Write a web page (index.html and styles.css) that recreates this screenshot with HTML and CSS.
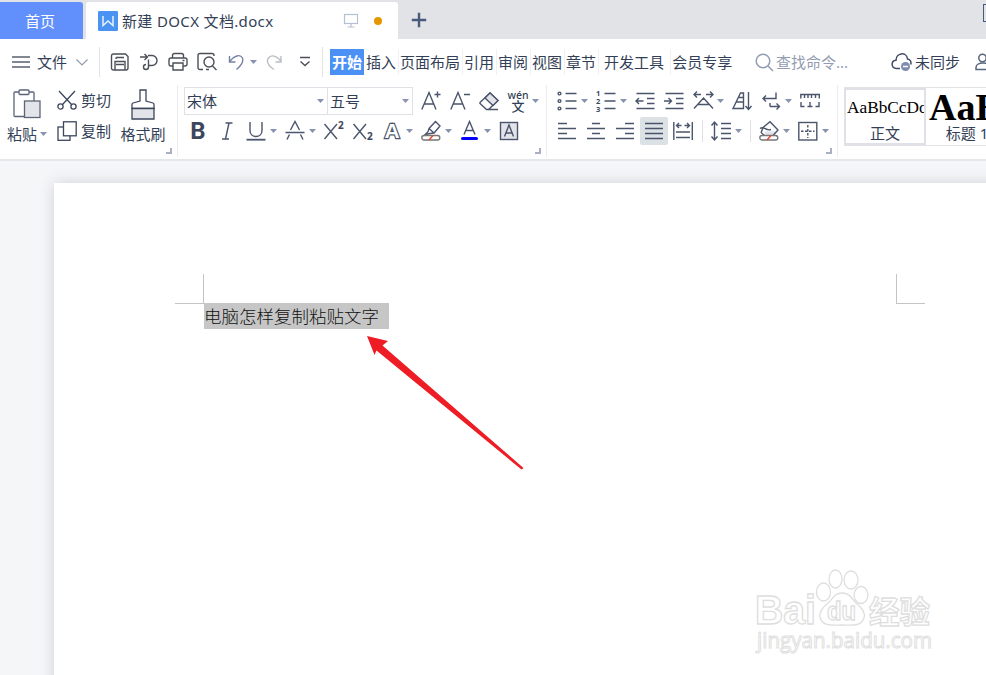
FILE: index.html
```html
<!DOCTYPE html>
<html lang="zh-CN">
<head>
  <meta charset="UTF-8">
  <meta name="viewport" content="width=device-width, initial-scale=1.0">
  <title>新建 DOCX 文档.docx</title>
  <link rel="stylesheet" href="styles.css">
</head>
<body>
  <div class="tabbar">
    <div class="tab-home">首页</div>
    <div class="tab-doc">
      <svg class="doc-logo" width="20" height="20" viewBox="0 0 20 20"><rect width="20" height="20" rx="1" fill="#4a93f3"/><path d="M5 5v9.500l5-4.500 5 4.500V5" fill="none" stroke="#e8f2ff" stroke-width="1.500"/></svg>
      <span class="doc-name">新建 DOCX 文档.docx</span>
      <svg class="monitor" width="16" height="16" viewBox="0 0 16 16" fill="none" stroke="#b7bfd2" stroke-width="1.200"><rect x="1.500" y="1.500" width="13" height="9"/><path d="M8 10.500v3M4.500 14h7"/></svg>
      <span class="unsaved"></span>
    </div>
    <svg class="new-tab" width="16" height="16" viewBox="0 0 16 16" stroke="#4a5a7b" stroke-width="2.400"><path d="M8 .8v14.400M.8 8h14.400"/></svg>
    <span class="window-edge"></span>
  </div>

  <div class="menubar">
    <div class="file-menu">
      <svg width="18" height="14" viewBox="0 0 18 14" stroke="#59616f" stroke-width="1.300"><path d="M0 2h18M0 7h18M0 12h18"/></svg>
      <span>文件</span>
      <svg class="chevron" width="12" height="8" viewBox="0 0 12 8" fill="none" stroke="#929aaa" stroke-width="1.200"><path d="M.5 1.500l5.500 5.500 5.500-5.500"/></svg>
    </div>
    <div class="quick">
      <svg viewBox="0 0 20 20"><path d="M3.500 2h12l2.500 2.500V16a2 2 0 0 1-2 2H3.500a2 2 0 0 1-2-2V4a2 2 0 0 1 2-2zM5 18v-8.500h10V18M6 5.500h8M6 5.500V7M6 12.500h8"/></svg>
      <svg viewBox="0 0 20 20"><path d="M1 5h7M5.500 2l3 3-3 3M9 3.500h4a5 5 0 0 1 0 10H9.500V7.500M9.500 13.500v1.500a2.500 2.500 0 1 1-2.500-2.500"/></svg>
      <svg viewBox="0 0 20 20"><path d="M4.500 6V3.500a2 2 0 0 1 2-2h7a2 2 0 0 1 2 2V6M5 14H3a2 2 0 0 1-2-2V8a2 2 0 0 1 2-2h14a2 2 0 0 1 2 2v4a2 2 0 0 1-2 2h-2M5 11h10v7H5zM14.500 8.500h2"/></svg>
      <svg viewBox="0 0 20 20"><path d="M6 17.500H3a2 2 0 0 1-2-2v-12a2 2 0 0 1 2-2h12a2 2 0 0 1 2 2V4"/><circle cx="12" cy="10" r="5"/><path d="M15.500 14l4 4M9 17.500h3"/></svg>
      <svg class="undo" viewBox="0 0 20 20"><path d="M2.500 4v6h6M2.500 9.500C7 4 13 1.500 15.500 6c2 4-2 8-6 11.500"/></svg>
      <i class="caret"></i>
      <svg class="redo" viewBox="0 0 20 20"><path d="M16 4v6h-5.500M16 9.500C12 3.500 6 2 3 6.500 1 11 5 15 9 17.500"/></svg>
      <svg class="more" viewBox="0 0 12 12"><path d="M1 1.500h10M1.500 5.500L6 9.500l4.500-4"/></svg>
    </div>
    <div class="menus">
      <span class="menu active">开始</span>
      <span class="menu">插入</span>
      <span class="menu">页面布局</span>
      <span class="menu">引用</span>
      <span class="menu">审阅</span>
      <span class="menu">视图</span>
      <span class="menu">章节</span>
      <span class="menu wide">开发工具</span>
      <span class="menu last">会员专享</span>
    </div>
    <div class="search">
      <svg width="19" height="19" viewBox="0 0 19 19" fill="none" stroke="#929db4" stroke-width="1.500"><circle cx="8" cy="8" r="6.800"/><path d="M13 13l5 5"/></svg>
      <span>查找命令...</span>
    </div>
    <div class="sync">
      <svg width="21" height="20" viewBox="0 0 21 20" fill="none" stroke="#3f4b63" stroke-width="1.500"><path d="M9 16.500H5.500C-.5 16 0 8.500 5 8.200 5 .5 15.500-.5 16.500 7c3 .5 4 3 3.200 5.500"/><circle cx="14.500" cy="14.500" r="4.500" fill="#7e8dae" stroke="none"/><path d="M12 14.500h5" stroke="#fff"/></svg>
      <span>未同步</span>
    </div>
    <svg class="person" width="18" height="18" viewBox="0 0 18 18" fill="none" stroke="#59657d" stroke-width="1.500"><circle cx="7.500" cy="5" r="3.700"/><path d="M1 16.500v-2c0-6 14-6 14 0v2z"/></svg>
  </div>

  <div class="ribbon">
    <div class="group clipboard">
      <div class="big paste">
        <svg width="28" height="31" viewBox="0 0 28 31" fill="#fff" stroke="#5c6478" stroke-width="1.300"><rect x="1" y="3" width="20" height="24.500" rx="1"/><rect x="6" y="1" width="10" height="4.500" rx="1"/><rect x="11.500" y="12" width="15.500" height="16.500" fill="#e2e4e9"/></svg>
        <span>粘贴<i class="caret"></i></span>
      </div>
      <div class="pair">
        <div class="small"><svg width="20" height="20" viewBox="0 0 20 20" fill="none" stroke="#3c465c" stroke-width="1.300"><path d="M2 1l12.500 13.500M18 1L5.500 14.500"/><circle cx="3.500" cy="16.500" r="2.600"/><circle cx="16.500" cy="16.500" r="2.600"/></svg><span>剪切</span></div>
        <div class="small"><svg width="20" height="20" viewBox="0 0 20 20" fill="#fff" stroke="#3c465c" stroke-width="1.300"><rect x="1" y="6" width="12" height="13.300"/><rect x="6.500" y=".8" width="12.700" height="14"/></svg><span>复制</span></div>
      </div>
      <div class="big brush">
        <svg width="24" height="31" viewBox="0 0 24 31" fill="#fff" stroke="#3c465c" stroke-width="1.300"><path d="M9 12V1h6v11l7 2q1 .3 1 1.500v4H1v-4Q1 14.300 2 14z"/><path d="M1 19.500h22V30H1z" fill="#e2e4e9"/></svg>
        <span>格式刷</span>
      </div>
      <i class="corner"></i>
    </div>

    <div class="group font">
      <div class="row">
        <div class="select family">宋体<i class="caret"></i></div>
        <div class="select size">五号<i class="caret"></i></div>
        <div class="tools after-select">
          <div class="tool"><svg viewBox="0 0 20 20"><path d="M.8 18.500L8 1.500l7 17M3.200 13h9.500M13.500 3.500h6M16.500 .5v6"/></svg></div>
          <div class="tool"><svg viewBox="0 0 20 20"><path d="M.8 18.500L8 1.500l7 17M3.200 13h9.500M14 3.500h6"/></svg></div>
          <div class="tool"><svg viewBox="0 0 20 20"><path d="M1 11.500L11 2l8 7.500-9.500 9H7.500L1 12.500zM9.500 18.500H19"/><path d="M6 7l8 7.500 5-5L11 2z" fill="#e2e4e9"/></svg></div>
          <div class="tool drop"><span class="pinyin"><b>wén</b><b>文</b></span><i class="caret"></i></div>
        </div>
      </div>
      <div class="row format">
        <div class="tool"><span class="glyph bold">B</span></div>
        <div class="tool"><svg viewBox="0 0 20 20"><path d="M8.500 2h7M5 18h7M12 2L8.500 18"/></svg></div>
        <div class="tool drop"><svg viewBox="0 0 20 20"><path d="M4 1v8.500c0 8 12 8 12 0V1"/><path d="M.5 18.700h19" stroke-width="1.800"/></svg><i class="caret"></i></div>
        <div class="tool drop"><svg viewBox="0 0 20 20"><path d="M5.500 9L10 .5 14.500 9M2 18.500l2.500-5M18 18.500l-2.500-5M.5 11.500h19"/></svg><i class="caret"></i></div>
        <div class="tool"><svg viewBox="0 0 20 20"><path d="M.5 3L13 18M13 3L.5 18"/><text x="14" y="8">2</text></svg></div>
        <div class="tool"><svg viewBox="0 0 20 20"><path d="M.5 3L13 18M13 3L.5 18"/><text x="14" y="19">2</text></svg></div>
        <div class="tool drop"><span class="glyph outline">A</span><i class="caret"></i></div>
        <div class="tool drop"><svg viewBox="0 0 20 20"><path d="M8 7.500l6.500-7 4.500 4.500-6 7-4 .5-5 1.200 3-3zM8 7.500l5 4.500"/><rect x=".8" y="14.500" width="18" height="4.500" rx="2.200" fill="#fff" stroke="#777"/><path d="M8 19l4-4.500" stroke="#e9432f"/></svg><i class="caret"></i></div>
        <div class="tool drop"><svg viewBox="0 0 20 20"><path d="M4 13.500l5.500-13 5.500 13M6 9.500h7.500"/><path d="M2.500 17.500h14" stroke="#0000fe" stroke-width="3" stroke-linecap="round"/></svg><i class="caret"></i></div>
        <div class="tool"><svg viewBox="0 0 20 20"><rect x="1.500" y="1.500" width="17" height="17" fill="#e2e4e9"/><path d="M5.500 15.500L10 4l4.500 11.500M7 12h6"/></svg></div>
      </div>
      <i class="corner"></i>
    </div>

    <div class="group paragraph">
      <div class="row">
        <div class="tool drop"><svg viewBox="0 0 20 20"><circle cx="2.500" cy="2.500" r="1.400"/><circle cx="2.500" cy="10" r="1.400"/><circle cx="2.500" cy="17.500" r="1.400"/><path d="M8.500 2.500h11M8.500 10h11M8.500 17.500h11"/></svg><i class="caret"></i></div>
        <div class="tool drop"><svg viewBox="0 0 20 20"><text class="num" x="0" y="5">1</text><text class="num" x="0" y="13">2</text><text class="num" x="0" y="20.500">3</text><path d="M8.500 2.500h11M8.500 10h11M8.500 17.500h11"/></svg><i class="caret"></i></div>
        <div class="tool"><svg viewBox="0 0 20 20"><path d="M1.500 2.500h18M12 7.500h7.500M12 12.500h7.500M1.500 17.500h18M1 10h7.500M4 7l-3 3 3 3"/></svg></div>
        <div class="tool"><svg viewBox="0 0 20 20"><path d="M1.500 2.500h18M12 7.500h7.500M12 12.500h7.500M1.500 17.500h18M0 10h7.500M4.500 7l3 3-3 3"/></svg></div>
        <div class="tool drop"><svg viewBox="0 0 20 20"><path d="M1 17.500L10.500 7 20 17.500M5 13.500h11M1 3.500h7M4 .5l-3 3 3 3M13 3.500h7M17 .5l3 3-3 3"/></svg><i class="caret"></i></div>
        <div class="tool"><svg viewBox="0 0 20 20"><path d="M1 17.500L8.500 2h3v15.500zM4.500 11h7M7 6.500h4.500M16.500 1v17M13.500 15l3 3.500 3-3.500"/></svg></div>
        <div class="tool drop"><svg viewBox="0 0 20 20"><path d="M15 1.500v6H2M5 4.500l-3 3 3 3M9 15.500h9.500M15.500 12.500l3 3-3 3M9 12v3.500"/></svg><i class="caret"></i></div>
        <div class="tool"><svg viewBox="0 0 20 20"><path d="M.8 7.500V3.500h18.500v4M4.500 3.500V7M8 3.500V7M11.500 3.500V7M15.500 3.500V7M1 11v4.500h3.500M19 11v4.500h-3.500M10 11v4.500M7.500 15.500h5"/></svg></div>
      </div>
      <div class="row">
        <div class="tool"><svg viewBox="0 0 20 20"><path d="M1 2.500h9M1 7.500h18M1 12.500h9M1 17.500h18"/></svg></div>
        <div class="tool"><svg viewBox="0 0 20 20"><path d="M6 2.500h8M1 7.500h18M6 12.500h8M1 17.500h18"/></svg></div>
        <div class="tool"><svg viewBox="0 0 20 20"><path d="M10 2.500h9M1 7.500h18M10 12.500h9M1 17.500h18"/></svg></div>
        <div class="tool pressed"><svg viewBox="0 0 20 20"><path d="M1 2.500h18M1 7.500h18M1 12.500h18M1 17.500h18"/></svg></div>
        <div class="tool"><svg viewBox="0 0 20 20"><path d="M.8 1v18M19.300 1v18M3.500 4.500h5M6 2L3.500 4.500 6 7M11.500 4.500h5M14 2l2.500 2.500L14 7M3 11h14M3 16.500h14"/></svg></div>
        <i class="split"></i>
        <div class="tool drop"><svg viewBox="0 0 20 20"><path d="M3.500 1.500v17M.5 4.500l3-3.500 3 3.500M.5 15.500l3 3.500 3-3.500M10 2.500h10M10 7.500h10M10 12.500h10M10 17.500h10"/></svg><i class="caret"></i></div>
        <i class="split"></i>
        <div class="tool drop"><svg viewBox="0 0 20 20"><path d="M5 10.500h13l-5 4.500H8z" fill="#e2e4e9" stroke="none"/><path d="M4 6.500L11 .8l8 8.200-5 5.500M2.500 12l3 2.500M4 6.500L2 12"/><path d="M1 7.500c4-3 6 3 11 1"/><rect x=".8" y="14.500" width="18" height="4.500" rx="2.200" fill="#fff" stroke="#777"/><path d="M8 19l4-4.500" stroke="#e9432f"/></svg><i class="caret"></i></div>
        <div class="tool drop"><svg viewBox="0 0 20 20"><rect x=".8" y="1.500" width="18" height="17.500"/><path d="M9.800 4v13M3 10.200h13.500" stroke-dasharray="2.500 1.500"/></svg><i class="caret"></i></div>
      </div>
      <i class="corner"></i>
    </div>

    <div class="gallery">
      <div class="style selected"><span class="sample">AaBbCcDd</span><span class="style-name">正文</span></div>
      <div class="style"><span class="sample heading">AaBb</span><span class="style-name">标题 1</span></div>
    </div>
  </div>

  <div class="workspace">
    <div class="page">
      <div class="line"><i class="margin-mark left"></i><span class="selection">电脑怎样复制粘贴文字</span><i class="margin-mark right"></i></div>
    </div>
    <svg class="arrow" width="160" height="138" viewBox="0 0 160 138"><path d="M1 1l21 5-5.500 4.500L157.500 133l-2 1.500L10.500 15.500 8.500 20z" fill="#ee1c24"/></svg>
    <svg class="watermark" width="184" height="94" viewBox="0 0 184 94">
      <g class="mark">
        <text x="3" y="59" font-size="40" font-weight="700" textLength="61" lengthAdjust="spacingAndGlyphs">Bai</text>
        <ellipse cx="71.500" cy="27" rx="7" ry="9"/><ellipse cx="83.500" cy="14" rx="6.500" ry="9"/><ellipse cx="99" cy="15" rx="7" ry="9"/><ellipse cx="109" cy="30" rx="7" ry="8.500"/>
        <path d="M90 28c-8 0-9 6-14 10-5 4-9 8-8 14 2 10 13 8 22 8s19 2 22-7c2-6-3-11-8-15-4-4-6-10-14-10z"/>
        <text x="75" y="55" font-size="25" font-weight="700" textLength="29" lengthAdjust="spacingAndGlyphs">du</text>
        <text class="cjk" x="117" y="58" font-size="31" font-weight="700" textLength="61" lengthAdjust="spacingAndGlyphs">经验</text>
        <text class="url" x="5" y="83" font-size="22" textLength="175" lengthAdjust="spacingAndGlyphs">jingyan.baidu.com</text>
      </g>
    </svg>
  </div>
</body>
</html>
```

FILE: styles.css
```css
* {
  box-sizing: border-box;
}
body {
  margin: 0;
  width: 986px;
  height: 675px;
  overflow: hidden;
  display: flex;
  flex-direction: column;
  font-family: "Noto Sans", "Noto Sans CJK SC", sans-serif;
  font-size: 15px;
  line-height: 20px;
  color: #333f57;
  background-color: #fff;
  white-space: nowrap;
}
svg {
  display: block;
  flex: none;
}
.tabbar {
  display: flex;
  flex: none;
  align-items: flex-end;
  height: 39px;
  background-color: #e2e3e7;
}
.tab-home {
  width: 83px;
  height: 37px;
  line-height: 38px;
  padding-left: 25px;
  color: #fff;
  background-color: #618ffb;
  border-top-right-radius: 3px;
}
.tab-doc {
  display: flex;
  align-items: center;
  width: 312px;
  height: 37px;
  margin-left: 3px;
  padding-left: 12px;
  background-color: #fff;
  border-radius: 3px 3px 0 0;
}
.doc-name {
  width: 158px;
  margin-left: 4px;
  letter-spacing: 0.35px;
}
.monitor {
  margin-left: 63px;
}
.unsaved {
  width: 8px;
  height: 8px;
  margin-left: 15px;
  border-radius: 50%;
  background-color: #e59700;
}
.new-tab {
  margin: 0 0 11px 13px;
}
.window-edge {
  width: 5px;
  height: 18px;
  margin: 0 -2px 17px auto;
  border: 1px solid #4a5a7b;
}

/* menu bar */
.menubar {
  display: flex;
  align-items: center;
  flex: none;
  height: 42px;
  padding: 4px 0 0 12px;
}
.file-menu {
  display: flex;
  align-items: center;
  flex: none;
  width: 88px;
  height: 30px;
  border-right: 1px solid #e2e3e7;
}
.file-menu span {
  margin: 0 9px 0 7px;
}
.quick {
  display: flex;
  align-items: center;
  flex: none;
  width: 223px;
  height: 30px;
  padding-left: 10px;
  border-right: 1px solid #e2e3e7;
}
.quick svg {
  width: 20px;
  height: 20px;
  margin-right: 9px;
  fill: none;
  stroke: #4b5058;
  stroke-width: 1.4;
}
.quick .undo {
  margin: 0 3px 0 1px;
  stroke: #7583a2;
}
.quick .redo {
  margin: 0 14px 0 8px;
  stroke: #b9bdc5;
}
.quick .more {
  width: 12px;
  height: 12px;
  margin: 0;
}
.caret {
  display: block;
  flex: none;
  width: 7px;
  height: 4px;
  background-color: #8793af;
  clip-path: polygon(0 0, 100% 0, 50% 100%);
}
.menus {
  display: flex;
  flex: none;
  width: 404px;
  margin-left: 7px;
}
.menu {
  flex: none;
  height: 26px;
  line-height: 26px;
  padding: 0 2px;
  border-right: 1px solid #f0f1f3;
  margin-right: -1px;
}
.menu.active {
  color: #fff;
  font-weight: 700;
  background-color: #4b90f4;
  border: 0;
  margin: 0;
}
.menu.wide {
  padding: 0 6px;
  margin: 0;
}
.menu.last {
  border: 0;
  padding-left: 1px;
}
.search {
  display: flex;
  align-items: center;
  flex: none;
  gap: 2px;
  margin-left: 21px;
  width: 136px;
  color: #939db2;
}
.sync {
  display: flex;
  align-items: center;
  flex: none;
  gap: 3px;
  width: 84px;
}

/* ribbon */
.ribbon {
  display: flex;
  flex: none;
  height: 78px;
}
.group {
  position: relative;
  flex: none;
  height: 72px;
  margin-top: 4px;
  border-right: 1px solid #ebecef;
}
.corner {
  position: absolute;
  right: 5px;
  bottom: 3px;
  width: 6px;
  height: 6px;
  border: solid #a9b0c1;
  border-width: 0 2px 2px 0;
}
.clipboard {
  display: flex;
  width: 178px;
  padding: 4px 0 0 7px;
}
.big {
  display: flex;
  flex-direction: column;
  align-items: center;
  gap: 4px;
}
.big span {
  display: flex;
  align-items: center;
  gap: 3px;
}
.paste {
  width: 40px;
}
.pair {
  display: flex;
  flex-direction: column;
  gap: 11px;
  width: 65px;
  padding: 1px 0 0 10px;
}
.small {
  display: flex;
  align-items: center;
  gap: 4px;
  height: 20px;
}
.brush {
  width: 62px;
}
.font {
  width: 369px;
  padding: 2px 0 0 6px;
}
.paragraph {
  width: 291px;
  padding: 2px 0 0 10px;
}
.row {
  display: flex;
  align-items: center;
  height: 28px;
}
.row + .row {
  margin-top: 2px;
}
.select {
  display: flex;
  align-items: center;
  justify-content: space-between;
  flex: none;
  height: 28px;
  padding: 0 3px 0 2px;
  border: 1px solid #dfe1e7;
}
.family {
  width: 144px;
}
.size {
  width: 86px;
  margin-left: -1px;
}
.tools {
  display: flex;
  flex: none;
}
.after-select {
  margin-left: 8px;
}
.format {
  padding-left: 4px;
}
.tool {
  display: flex;
  align-items: center;
  flex: none;
  width: 29px;
  height: 28px;
}
.tool svg {
  width: 20px;
  height: 20px;
  overflow: visible;
  fill: none;
  stroke: #4a556c;
  stroke-width: 1.4;
}
.tool text {
  fill: #3c465c;
  stroke: none;
  font-size: 10px;
  font-weight: 700;
}
.tool .num {
  font-size: 7.5px;
}
.drop {
  width: 39px;
  gap: 4px;
}
.pressed {
  width: 28px;
  margin: 0 5px 0 -4px;
  padding-left: 4px;
  background-color: #dce1e6;
  border-radius: 2px;
}
.glyph {
  width: 20px;
  height: 28px;
  line-height: 28px;
  text-align: center;
  color: #3c465c;
}
.bold {
  font: 700 24px/28px Roboto, sans-serif;
}
.outline {
  font: 700 21px/28px "Liberation Sans", sans-serif;
  color: #fff;
  -webkit-text-stroke: 2.4px #4a556c;
  paint-order: stroke fill;
}
.pinyin {
  display: flex;
  flex-direction: column;
  align-items: center;
  width: 20px;
}
.pinyin b {
  font-weight: 500;
  font-size: 10.5px;
  line-height: 9px;
}
.pinyin b + b {
  font-size: 13px;
  line-height: 12px;
}
.split {
  width: 1px;
  height: 22px;
  margin-right: 8px;
  background-color: #dfe1e6;
}

/* style gallery */
.gallery {
  display: flex;
  flex: none;
  width: 160px;
  height: 59px;
  margin: 6px 0 0 6px;
  border: 1px solid #e2e3e7;
}
.style {
  flex: none;
  width: 82px;
  height: 57px;
  padding: 0 2px;
  overflow: hidden;
  text-align: center;
}
.selected {
  margin-left: -1px;
  padding: 0;
  border: 2px solid #e0e1e6;
}
.sample {
  display: block;
  height: 34px;
  padding-left: 1px;
  font: 17.3px/36px "Liberation Serif", serif;
  color: #000;
  text-align: left;
}
.heading {
  height: 36px;
  font-weight: 700;
  font-size: 38px;
  line-height: 38px;
}
.style-name {
  display: block;
  line-height: 18px;
}

/* document */
.workspace {
  position: relative;
  flex: 1;
  padding: 22px 0 0 54px;
  background-color: #f5f6f8;
  border-top: 2px solid #e6e7ea;
}
.page {
  width: 960px;
  height: 520px;
  padding: 120px 0 0 150px;
  background-color: #fff;
  box-shadow: 0 0 14px #cfd1d5;
}
.line {
  position: relative;
  width: 692px;
  height: 26px;
}
.selection {
  display: block;
  width: 185px;
  height: 26px;
  font: 300 17.5px/26px "Noto Sans CJK SC", sans-serif;
  color: #111;
  background-color: #c6c6c6;
}
.margin-mark {
  position: absolute;
  top: -29px;
  width: 29px;
  height: 30px;
  border: 0 solid #c4c4c4;
  border-bottom-width: 1px;
}
.margin-mark.left {
  left: -29px;
  border-right-width: 1px;
}
.margin-mark.right {
  right: -29px;
  border-left-width: 1px;
}
.arrow {
  position: absolute;
  left: 366px;
  top: 174px;
}
.watermark {
  position: absolute;
  left: 752px;
  top: 404px;
}
.mark {
  fill: #fff;
  stroke: #dedede;
  stroke-width: 1.3;
  font-family: "Liberation Sans", sans-serif;
}
.mark .cjk {
  font-family: "Noto Sans CJK SC", sans-serif;
}
.mark .url {
  font-family: "Open Sans", sans-serif;
  stroke-width: 1;
}
```
